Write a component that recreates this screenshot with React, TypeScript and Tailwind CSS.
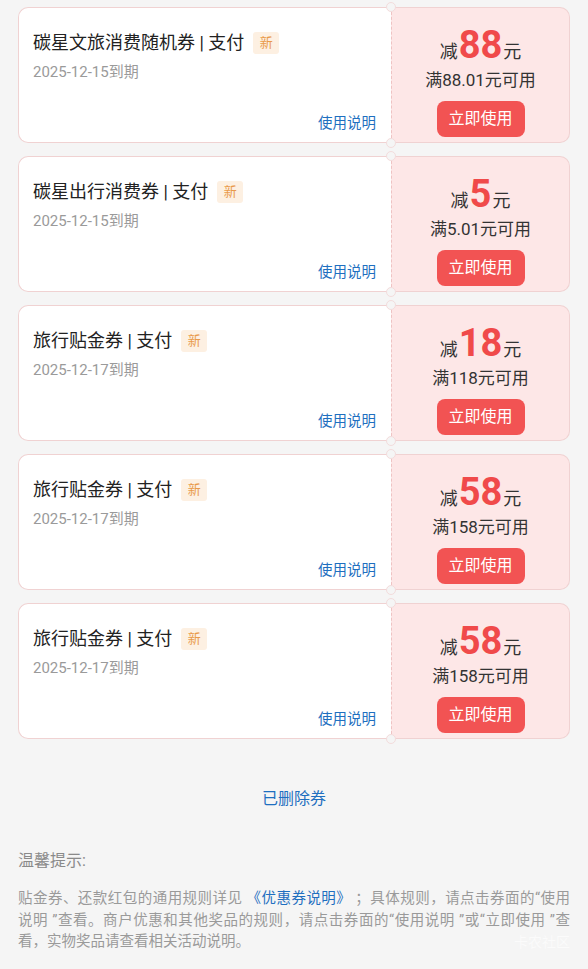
import React from "react";

type Coupon = {
  title: string;
  date: string;
  amount: string;
  min: string;
};

const coupons: Coupon[] = [
  { title: "碳星文旅消费随机券 | 支付", date: "2025-12-15到期", amount: "88", min: "满88.01元可用" },
  { title: "碳星出行消费券 | 支付", date: "2025-12-15到期", amount: "5", min: "满5.01元可用" },
  { title: "旅行贴金券 | 支付", date: "2025-12-17到期", amount: "18", min: "满118元可用" },
  { title: "旅行贴金券 | 支付", date: "2025-12-17到期", amount: "58", min: "满158元可用" },
  { title: "旅行贴金券 | 支付", date: "2025-12-17到期", amount: "58", min: "满158元可用" },
];

const font = { fontFamily: '"Roboto", "Noto Sans CJK SC", sans-serif' };

const CouponCard: React.FC<{ c: Coupon }> = ({ c }) => {
  return (
    <div className="relative flex h-[136px]">
      <div className="flex-1 flex flex-col bg-white border border-r-0 border-[#f0d2d2] rounded-l-[10px] pl-[14px] pr-[15px] pt-[23px] pb-[8px]">
        <div className="flex items-center h-[24px]">
          <span className="text-[18px] leading-[24px] text-[#222]">{c.title}</span>
          <span className="ml-[9px] w-[26px] h-[22px] flex items-center justify-center rounded-[3px] bg-[#fdf0e2] text-[#e99a4a] text-[13px]">
            新
          </span>
        </div>
        <div className="mt-[7px] text-[15px] leading-[20px] text-[#9a9a9a]">{c.date}</div>
        <div className="mt-auto self-end text-[14.5px] leading-[20px] text-[#1e6fc0]">使用说明</div>
      </div>
      <div className="w-[179px] flex flex-col items-center bg-[#fde7e7] border border-[#f0d2d2] border-l-[#efc3c3] [border-left-style:dashed] rounded-r-[10px] pt-[17px]">
        <div className="flex items-baseline h-[40px] leading-[40px] text-[#333]">
          <span className="text-[18px]">减</span>
          <span className="text-[38px] font-bold text-[#f04a4a] mx-[1px]">{c.amount}</span>
          <span className="text-[18px]">元</span>
        </div>
        <div className="mt-[4px] text-[17px] leading-[22px] text-[#333]">{c.min}</div>
        <button className="mt-[10px] w-[88px] h-[36px] rounded-[8px] bg-[#f25353] text-white text-[16px]">立即使用</button>
      </div>
      <div className="absolute left-[368px] top-[-5px] w-[10px] h-[10px] rounded-full bg-[#f5f5f5] border border-[#f3dcdc]" />
      <div className="absolute left-[368px] bottom-[-5px] w-[10px] h-[10px] rounded-full bg-[#f5f5f5] border border-[#f3dcdc]" />
    </div>
  );
};

const App: React.FC = () => {
  return (
    <div className="relative min-h-[969px] bg-[#f5f5f5] px-[18px] pt-[7px]" style={font}>
      <div className="flex flex-col gap-[13px]">
        {coupons.map((c, i) => (
          <CouponCard key={i} c={c} />
        ))}
      </div>
      <div className="mt-[48px] text-center text-[16px] leading-[24px] text-[#1e6fc0]">已删除券</div>
      <div className="mt-[38px] text-[16px] leading-[24px] text-[#8a8a8a]">温馨提示:</div>
      <div className="mt-[15px] text-[14.5px] leading-[21.5px] text-[#9a9a9a]">
        <div className="text-justify [text-align-last:justify]">
          贴金券、还款红包的通用规则详见 <span className="text-[#1e6fc0]">《优惠券说明》</span> ；具体规则，请点击券面的“使用
        </div>
        <div className="text-justify [text-align-last:justify]">
          说明 ”查看。商户优惠和其他奖品的规则，请点击券面的“使用说明 ”或“立即使用 ”查
        </div>
        <div>看，实物奖品请查看相关活动说明。</div>
      </div>
      <div className="absolute right-[18px] bottom-[18px] text-[14px] leading-[18px] text-white opacity-60">卡农社区</div>
    </div>
  );
};

export default App;
